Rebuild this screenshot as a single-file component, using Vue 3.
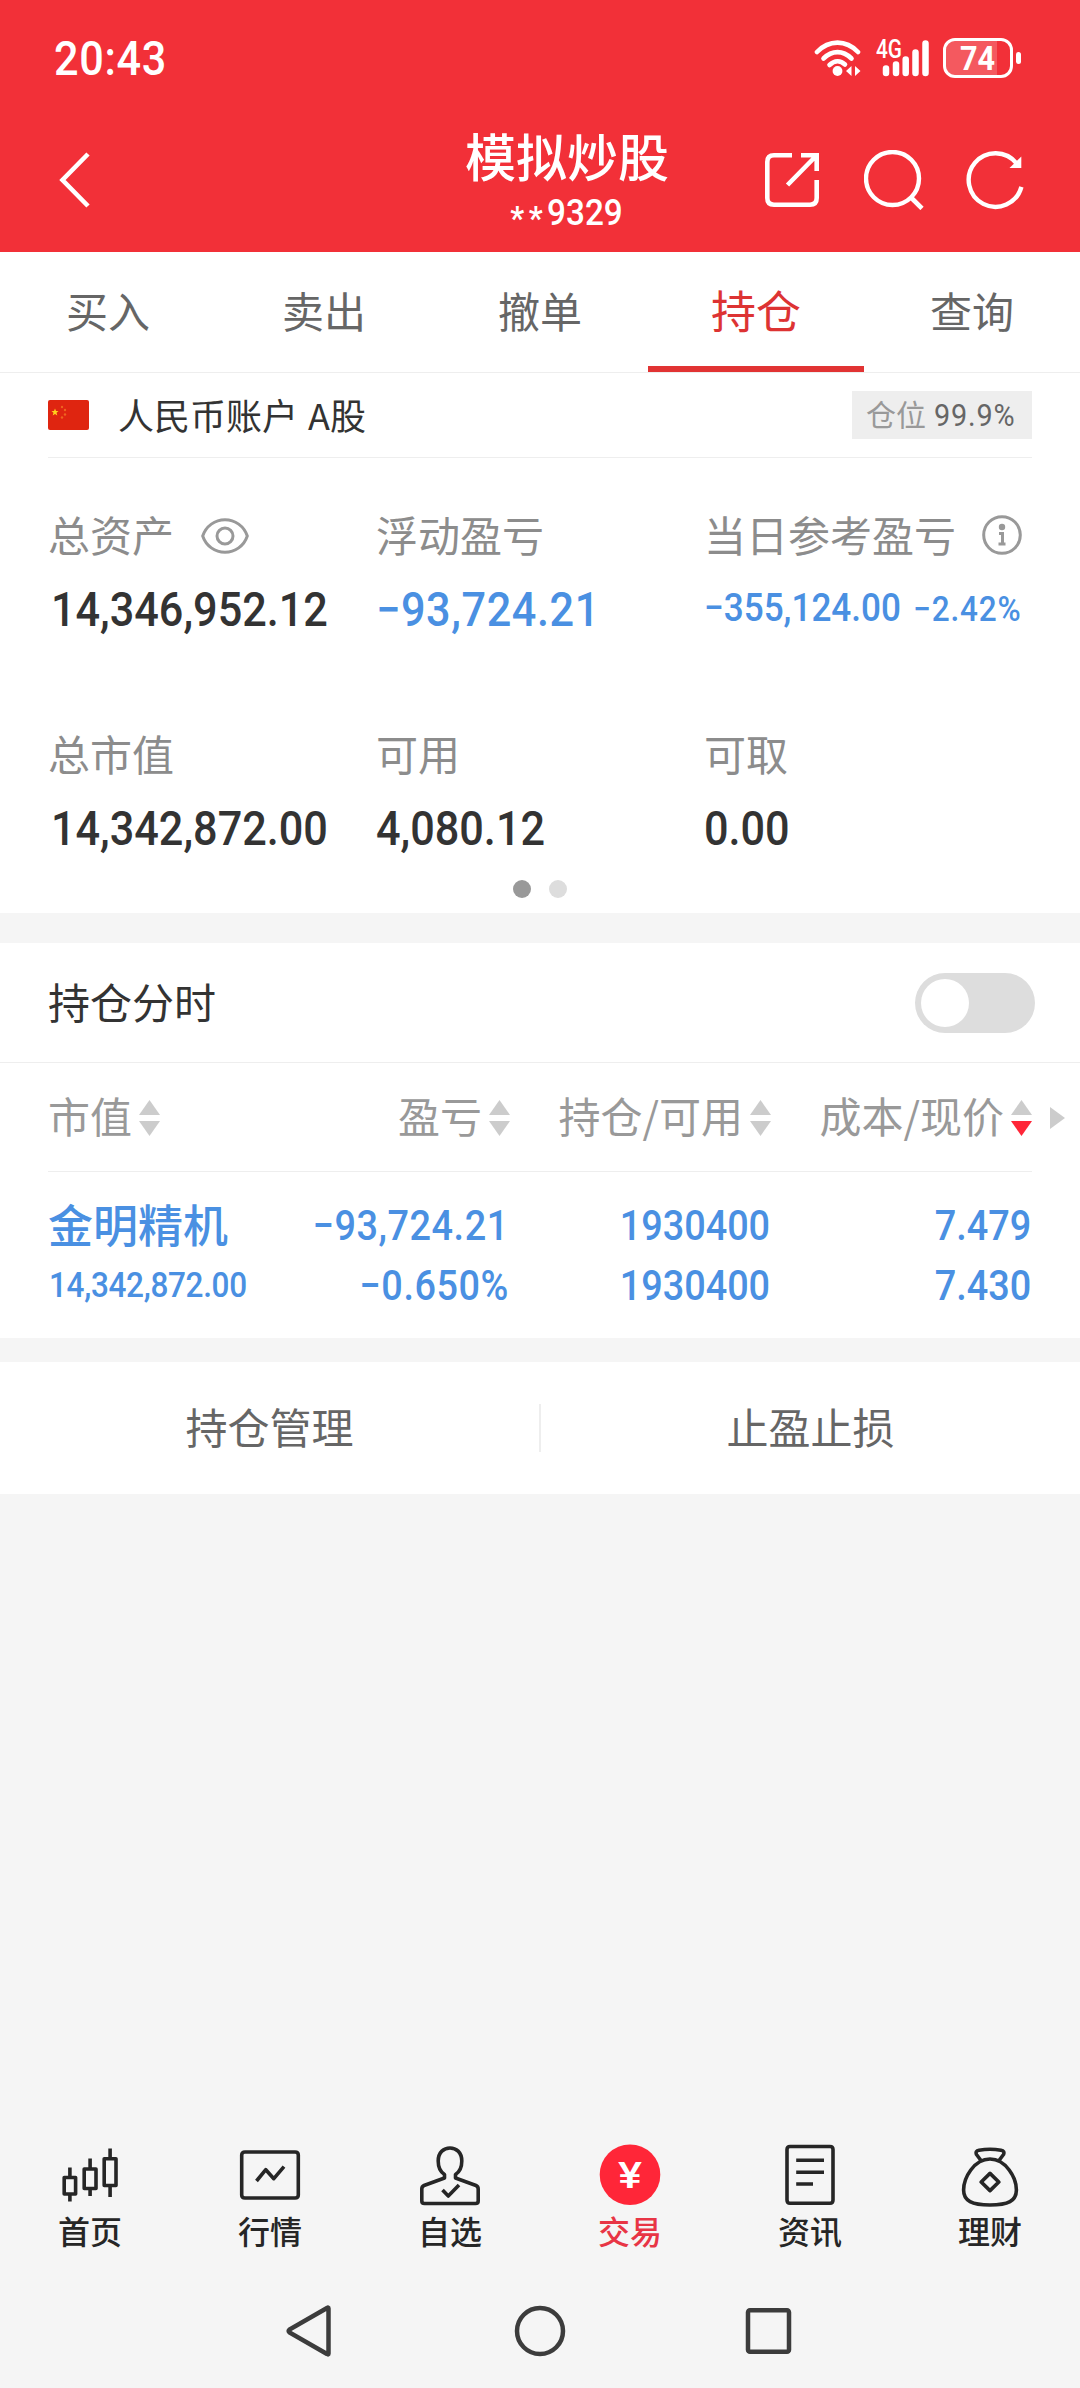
<script setup>
import { ref } from 'vue'

const abas = ['买入', '卖出', '撤单', '持仓', '查询']
const abaAtiva = ref('持仓')
const mostrarGrafico = ref(false)

const colunas = [
  { nome: '市值', ordem: '' },
  { nome: '盈亏', ordem: '' },
  { nome: '持仓/可用', ordem: '' },
  { nome: '成本/现价', ordem: 'desc' }
]

const posicoes = [
  {
    nome: '金明精机',
    valor: '14,342,872.00',
    lucro: '−93,724.21',
    taxa: '−0.650%',
    total: '1930400',
    disponivel: '1930400',
    custo: '7.479',
    preco: '7.430'
  }
]

const menu = [
  {
    nome: '首页',
    icone: 'M15.9 27.5V37.5M15.9 54V61.5M10.2 37.5H21.6V54H10.2ZM36.1 18.5V29M36.1 48.5V56M30.2 29H42V48.5H30.2ZM56.1 8.5V18.7M56.1 45.5V57M50.2 18.7H62V45.5H50.2Z'
  },
  {
    nome: '行情',
    icone: 'M11 12H61Q64.3 12 64.3 15V55Q64.3 58 61 58H11Q7.7 58 7.7 55V15Q7.7 12 11 12ZM22.5 41L31.8 29.7L39.8 38.7L50 26.7'
  },
  {
    nome: '自选',
    icone: 'M30.5 38V34.5C25 31 24.2 26 24.2 21C24.2 12 30 8 36 8S47.8 12 47.8 21C47.8 26 47 31 41.5 34.5V38L62 45.5Q64.2 46.5 64.2 49V61Q64.2 63.5 61.5 63.5H10.5Q7.8 63.5 7.8 61V49Q7.8 46.5 10 45.5ZM28.5 50L34.3 56L45 45'
  },
  { nome: '交易', icone: '' },
  {
    nome: '资讯',
    icone: 'M16 6.5H56Q59 6.5 59 9.5V60Q59 63.3 56 63.3H16Q13 63.3 13 60V9.5Q13 6.5 16 6.5ZM22.2 20.3H50M22.2 32.2H50M22.2 44H39'
  },
  {
    nome: '理财',
    icone: 'M36 19C20 19 9.6 38 9.6 50C9.6 61 18 65 36 65S62.4 61 62.4 50C62.4 38 52 19 36 19ZM27 20.5L22.5 14.5Q21 11 25 10.3Q36 8.3 47 10.3Q51 11 49.5 14.5L45 20.5M36 33.4L44.8 42L36 50.6L27.2 42Z'
  }
]
</script>

<template>
  <div class="tela">
    <header class="topo">
      <div class="status">
        <span class="num hora">20:43</span>
        <div class="sinais">
          <svg width="48" height="38" viewBox="0 0 48 38">
            <g fill="none" stroke="#fff" stroke-width="4.6" stroke-linecap="round">
              <path d="M3 13C15 .5 32 .5 44 13" />
              <path d="M9.5 19.5C18 11 29 11 37.5 19.5" />
              <path d="M15.5 26C20.5 21.2 26.5 21.2 31 25.5" />
            </g>
            <circle cx="23.5" cy="32" r="4.9" fill="#fff" />
            <path d="M37.5 27V37L32 32ZM41 27L46.5 32L41 37Z" fill="#fff" />
          </svg>
          <svg class="rede" width="54" height="58" viewBox="0 -10 54 58">
            <text class="rede-texto" x="0" y="18.5" textLength="26" lengthAdjust="spacingAndGlyphs">4G</text>
            <path d="M10 29.5V34M20 25.5V34M29.7 20.5V34M39.5 13.5V34M49.5 4.5V34" stroke="#fff" stroke-width="6.5" stroke-linecap="round" />
          </svg>
          <div class="bateria">
            <div class="corpo"><span class="carga"></span><span class="num nivel">74</span></div>
            <span class="polo"></span>
          </div>
        </div>
      </div>
      <div class="barra">
        <svg class="voltar" width="34" height="58" viewBox="0 0 34 58">
          <path d="M31 3L5.5 29L31 55" fill="none" stroke="#fff" stroke-width="4.6" />
        </svg>
        <div class="titulo">
          <h1>模拟炒股</h1>
          <p class="num"><span class="oculto">**</span>9329</p>
        </div>
        <div class="acoes">
          <svg width="60" height="60" viewBox="0 0 60 60" fill="none" stroke="#fff" stroke-width="4.6">
            <path d="M30 5.3H12Q5.3 5.3 5.3 12V48Q5.3 54.7 12 54.7H48Q54.7 54.7 54.7 48V30M39 5.3H54.7V21M53.5 6.5L25.5 35" />
          </svg>
          <svg width="60" height="60" viewBox="0 0 60 60" fill="none" stroke="#fff" stroke-width="4.4">
            <circle cx="28.5" cy="28.5" r="26.5" />
            <path d="M47 47.5L58 58.5" stroke-width="4.6" />
          </svg>
          <svg width="60" height="60" viewBox="0 0 60 60" fill="none" stroke="#fff" stroke-width="4.4">
            <path d="M50.6 13.5A26.8 26.8 0 1 0 55.4 36.9" />
            <path d="M55.3 6.5V18H43.5Z" fill="#fff" stroke="none" />
          </svg>
        </div>
      </div>
    </header>

    <nav class="abas">
      <a v-for="aba in abas" :key="aba" :class="{ ativa: aba === abaAtiva }" @click="abaAtiva = aba">{{ aba }}</a>
    </nav>

    <section class="conta">
      <div class="conta-linha">
        <svg width="41" height="30" viewBox="0 0 41 30">
          <rect width="41" height="30" rx="2" fill="#df2510" />
          <path d="M7 8.5L8 11L10.5 11L8.5 12.7L9.3 15.5L7 14L4.7 15.5L5.5 12.7L3.5 11L6 11Z" fill="#ffd21c" />
          <g fill="#ee6420">
            <circle cx="14" cy="7" r="1.2" />
            <circle cx="17" cy="10" r="1.2" />
            <circle cx="17" cy="14.5" r="1.2" />
            <circle cx="14" cy="17.5" r="1.2" />
          </g>
        </svg>
        <span class="conta-nome">人民币账户 A股</span>
        <span class="etiqueta">仓位 <b class="num">99.9%</b></span>
      </div>
      <div class="ativos">
        <div class="ativo">
          <span class="rotulo">总资产
            <svg class="olho" width="48" height="36" viewBox="0 0 48 36" fill="none" stroke="#999" stroke-width="3">
              <path d="M1.7 18C5 8 14 1.7 24 1.7S43 8 46.3 18C43 28 34 34.3 24 34.3S5 28 1.7 18Z" />
              <circle cx="24" cy="18" r="8" />
            </svg>
          </span>
          <span class="num valor total">14,346,952.12</span>
        </div>
        <div class="ativo">
          <span class="rotulo">浮动盈亏</span>
          <span class="num valor azul">−93,724.21</span>
        </div>
        <div class="ativo">
          <span class="rotulo">当日参考盈亏
            <svg class="info" width="40" height="40" viewBox="0 0 40 40">
              <circle cx="20" cy="20" r="18.3" fill="none" stroke="#999" stroke-width="3" />
              <circle cx="20" cy="12" r="3.2" fill="#999" />
              <path d="M17 18.5H20.5V29M16.5 29H23.5" fill="none" stroke="#999" stroke-width="3" />
            </svg>
          </span>
          <span class="num valor azul dia">−355,124.00 <small>−2.42%</small></span>
        </div>
        <div class="ativo">
          <span class="rotulo">总市值</span>
          <span class="num valor total">14,342,872.00</span>
        </div>
        <div class="ativo">
          <span class="rotulo">可用</span>
          <span class="num valor">4,080.12</span>
        </div>
        <div class="ativo">
          <span class="rotulo">可取</span>
          <span class="num valor">0.00</span>
        </div>
      </div>
      <div class="pontos"><i class="atual"></i><i></i></div>
    </section>

    <section class="carteira">
      <div class="grafico">
        <span class="grafico-nome">持仓分时</span>
        <button class="chave" :class="{ ligada: mostrarGrafico }" @click="mostrarGrafico = !mostrarGrafico"></button>
      </div>
      <div class="linha cabecalho">
        <div v-for="coluna in colunas" :key="coluna.nome" class="celula">
          <span>{{ coluna.nome }}</span>
          <svg width="21" height="36" viewBox="0 0 21 36" fill="#ccc">
            <path d="M10.5 0L21 15H0Z" />
            <path :class="{ desc: coluna.ordem === 'desc' }" d="M0 21H21L10.5 36Z" />
          </svg>
        </div>
        <svg class="mais" width="15" height="22" viewBox="0 0 15 22"><path d="M0 0L15 11L0 22Z" fill="#ccc" /></svg>
      </div>
      <div v-for="p in posicoes" :key="p.nome" class="linha posicao">
        <div><strong>{{ p.nome }}</strong><span class="num menor">{{ p.valor }}</span></div>
        <div class="lucro"><span class="num">{{ p.lucro }}</span><span class="num">{{ p.taxa }}</span></div>
        <div><span class="num">{{ p.total }}</span><span class="num">{{ p.disponivel }}</span></div>
        <div><span class="num">{{ p.custo }}</span><span class="num">{{ p.preco }}</span></div>
      </div>
    </section>

    <section class="botoes">
      <a>持仓管理</a>
      <a>止盈止损</a>
    </section>

    <footer class="menu">
      <a v-for="item in menu" :key="item.nome" :class="{ atual: !item.icone }">
        <svg width="72" height="72" viewBox="0 0 72 72">
          <path v-if="item.icone" :d="item.icone" fill="none" stroke="#262626" stroke-width="3.6" stroke-linejoin="round" />
          <template v-else>
            <circle cx="36" cy="34.7" r="30.3" fill="#ff2638" />
            <text class="iene" x="24" y="48" textLength="24" lengthAdjust="spacingAndGlyphs">¥</text>
          </template>
        </svg>
        <span>{{ item.nome }}</span>
      </a>
    </footer>
    <div class="sistema">
      <svg width="50" height="54" viewBox="0 0 50 54"><path d="M43.5 4.5V49.5Q43.5 51 42 50L4.5 28.5Q3 27 4.5 25.5L42 4Q43.5 3 43.5 4.5Z" /></svg>
      <svg width="54" height="54" viewBox="0 0 54 54"><circle cx="27" cy="27" r="23" /></svg>
      <svg width="50" height="54" viewBox="0 0 50 54"><rect x="3" y="6.2" width="41" height="41.5" rx="2" /></svg>
    </div>
  </div>
</template>

<style>
body {
  background-color: #f5f5f5;
}
</style>

<style scoped>
.tela {
  display: flex;
  flex-direction: column;
  width: 1080px;
  height: 2388px;
  background-color: #f5f5f5;
  color: #333;
  font-family: "Noto Sans CJK SC", sans-serif;
  font-size: 42px;
  line-height: 1;
}

.tela * {
  box-sizing: border-box;
}

h1,
p {
  margin: 0;
}

svg {
  display: block;
  flex: none;
}

/* digits are set a little narrower than Roboto's own */
.num {
  display: inline-block;
  font-family: Roboto, "Noto Sans CJK SC", sans-serif;
  font-weight: 500;
  white-space: nowrap;
  transform: scaleX(0.9);
  transform-origin: left;
}

.topo {
  height: 252px;
  background-color: #f23038;
  color: #fff;
}

.status {
  display: flex;
  justify-content: space-between;
  align-items: center;
  height: 115px;
  padding: 0 59px 0 54px;
}

.hora {
  padding-top: 2px;
  font-size: 48px;
  letter-spacing: 0.015em;
}

.sinais {
  display: flex;
  align-items: center;
}

.rede {
  margin: 0 13px 0 14px;
}

.rede-texto {
  font: 500 25px Roboto, sans-serif;
  fill: #fff;
}

.bateria {
  display: flex;
  align-items: center;
  gap: 3px;
}

.corpo {
  display: grid;
  place-items: center;
  overflow: hidden;
  width: 70px;
  height: 40px;
  border: 3px solid #fff;
  border-radius: 12px;
}

.carga,
.nivel {
  grid-area: 1 / 1;
}

.carga {
  justify-self: start;
  width: 51px;
  height: 34px;
  background-color: rgba(255, 255, 255, 0.2);
}

.nivel {
  font-size: 34px;
  font-weight: 700;
  line-height: 34px;
  transform-origin: center;
}

.polo {
  width: 5px;
  height: 12px;
  border-radius: 3px;
  background-color: #fff;
}

.barra {
  display: grid;
  grid-template-columns: 372px 390px 1fr;
  align-items: center;
  height: 130px;
}

.voltar {
  margin-left: 57px;
}

.titulo {
  padding-top: 9px;
  text-align: center;
}

.titulo h1 {
  font-size: 51px;
  font-weight: 500;
  line-height: 56px;
}

.titulo p {
  font-size: 37px;
  line-height: 60px;
  transform-origin: center;
}

.oculto {
  font-size: 34px;
  font-weight: 700;
  letter-spacing: 5px;
  line-height: 1;
  vertical-align: -5px;
}

.acoes {
  display: flex;
  gap: 42px;
}

.abas {
  display: flex;
  height: 121px;
  border-bottom: 1px solid #eee;
  background-color: #fff;
}

.abas a {
  flex: 1;
  height: 120px;
  color: #666;
  line-height: 116px;
  text-align: center;
}

.abas .ativa {
  border-bottom: 6px solid #e13333;
  color: #dd3333;
  font-size: 45px;
}

.conta {
  height: 540px;
  background-color: #fff;
}

.conta-linha {
  display: flex;
  align-items: center;
  height: 85px;
  margin: 0 48px;
  border-bottom: 1px solid #eee;
}

.conta-nome {
  flex: 1;
  margin-left: 29px;
  padding-bottom: 3px;
  font-size: 36px;
  word-spacing: 2px;
}

.etiqueta {
  width: 180px;
  height: 48px;
  padding-left: 14px;
  background-color: #eee;
  color: #999;
  font-size: 30px;
  line-height: 45px;
  white-space: nowrap;
}

.etiqueta b {
  margin-left: 1px;
  color: #666;
  font-size: 32px;
  font-weight: 400;
  letter-spacing: 0.03em;
}

.ativos {
  display: grid;
  grid-template-columns: 328px 328px 1fr;
  row-gap: 69px;
  padding: 40px 0 0 48px;
}

.ativo {
  display: flex;
  flex-direction: column;
}

.rotulo {
  display: flex;
  align-items: center;
  height: 75px;
  padding-bottom: 4px;
  color: #8c8c8c;
}

.olho {
  margin: 4px 0 0 27px;
}

.info {
  margin: 3px 0 0 26px;
}

.valor {
  height: 75px;
  font-size: 48px;
  line-height: 74px;
}

.total {
  margin-left: 3px;
}

.azul {
  color: #4a90e2;
  letter-spacing: 0.014em;
}

.dia {
  font-size: 39px;
  letter-spacing: 0;
  line-height: 71px;
}

.dia small {
  margin-left: 4px;
  font-size: 35px;
  letter-spacing: 0.025em;
}

.pontos {
  display: flex;
  justify-content: center;
  gap: 18px;
  margin-top: 13px;
}

.pontos i {
  width: 18px;
  height: 18px;
  border-radius: 50%;
  background-color: #ddd;
}

.pontos .atual {
  background-color: #999;
}

.carteira {
  height: 395px;
  margin-top: 30px;
  background-color: #fff;
}

.grafico {
  display: flex;
  justify-content: space-between;
  align-items: center;
  height: 120px;
  padding: 0 45px 0 48px;
  border-bottom: 1px solid #eee;
}

.grafico-nome {
  padding-bottom: 4px;
}

.chave {
  display: flex;
  width: 120px;
  height: 60px;
  padding: 6px;
  border: none;
  border-radius: 30px;
  background-color: #ddd;
}

.chave::before {
  content: "";
  width: 48px;
  height: 48px;
  border-radius: 50%;
  background-color: #fff;
}

.ligada {
  justify-content: flex-end;
  background-color: #f23038;
}

.linha {
  display: grid;
  grid-template-columns: 212px 250px 261px 261px;
  margin: 0 48px;
}

.cabecalho {
  grid-template-columns: 212px 250px 261px 261px 15px;
  align-items: center;
  height: 109px;
  margin-right: 0;
  background: linear-gradient(#eee, #eee) 0 100% / 984px 1px no-repeat;
  color: #999;
}

.celula {
  display: flex;
  align-items: center;
  justify-content: flex-end;
  gap: 7px;
  white-space: nowrap;
}

.celula span {
  padding-bottom: 5px;
}

.celula:first-child {
  justify-content: flex-start;
}

.desc {
  fill: #ff2638;
}

.mais {
  margin-left: 18px;
}

.posicao {
  padding-top: 24px;
  color: #4a90e2;
}

.posicao div {
  display: flex;
  flex-direction: column;
  align-items: flex-end;
  line-height: 60px;
}

.posicao div:first-child {
  align-items: flex-start;
}

.posicao .num {
  margin-right: 1px;
  transform-origin: right;
}

.posicao .lucro .num {
  letter-spacing: 0.014em;
}

.posicao strong {
  height: 60px;
  font-size: 45px;
  font-weight: 500;
  line-height: 55px;
}

.posicao .menor {
  margin-left: 1px;
  font-size: 35px;
  letter-spacing: -0.01em;
  transform-origin: left;
}

.botoes {
  display: flex;
  align-items: center;
  height: 132px;
  margin-top: 24px;
  background-color: #fff;
  color: #666;
}

.botoes a {
  flex: 1;
  height: 48px;
  line-height: 44px;
  text-align: center;
}

.botoes a:first-child {
  border-right: 2px solid #eee;
}

.menu {
  display: flex;
  margin-top: auto;
  height: 134px;
}

.menu a {
  flex: 1;
  display: flex;
  flex-direction: column;
  align-items: center;
  color: #262626;
  font-size: 32px;
  font-weight: 500;
}

.menu span {
  line-height: 36px;
}

.menu .atual {
  color: #e83545;
}

.iene {
  fill: #fff;
  font: 500 37px Roboto, sans-serif;
}

.sistema {
  display: flex;
  justify-content: center;
  align-items: center;
  gap: 178px;
  height: 114px;
}

.sistema svg {
  fill: none;
  stroke: #3c3c3c;
  stroke-width: 4.5px;
}
</style>
